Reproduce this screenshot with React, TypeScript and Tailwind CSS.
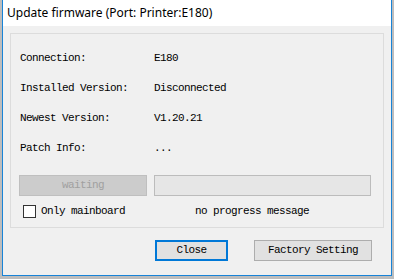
const mono = { fontFamily: '"Liberation Mono", "DejaVu Sans Mono", monospace' };

function InfoRow({ label, value }: { label: string; value: string }) {
  return (
    <div className="flex h-[30px] items-center">
      <span className="w-[143px] pl-[9px]">{label}</span>
      <span>{value}</span>
    </div>
  );
}

export default function App() {
  return (
    <div className="h-[279px] w-[394px] bg-[#bdbdbd]">
      <div className="ml-[2px] flex h-[276px] w-[390px] flex-col border-x border-b border-[#1883d7] bg-[#f0f0f0]">
        {/* title bar */}
        <div
          className="flex h-[26px] items-center bg-white pl-[4px] text-[12px] text-black"
          style={{ fontFamily: '"Noto Sans", "Open Sans", sans-serif' }}
        >
          Update firmware (Port: Printer:E180)
        </div>

        <div
          className="flex flex-1 flex-col px-[7px] pt-[7px] text-[11px] tracking-[-0.6px] text-black"
          style={mono}
        >
          {/* group box */}
          <div className="flex h-[195px] w-[374px] flex-col border border-[#dcdcdc] pt-[9px]">
            <InfoRow label="Connection:" value="E180" />
            <InfoRow label="Installed Version:" value="Disconnected" />
            <InfoRow label="Newest Version:" value="V1.20.21" />
            <InfoRow label="Patch Info:" value="..." />

            <div className="mt-[12px] flex gap-[7px] pl-[8px]">
              <div className="flex h-[21px] w-[128px] items-center justify-center border border-[#bfbfbf] bg-[#cccccc] text-[#a0a0a0]">
                waiting
              </div>
              <div className="h-[21px] w-[217px] border border-[#bcbcbc] bg-[#e6e6e6]" />
            </div>

            <div className="mt-[8px] flex h-[14px] items-center pl-[12px]">
              <div className="h-[13px] w-[13px] border border-[#333333] bg-white" />
              <span className="ml-[5px] w-[154px]">Only mainboard</span>
              <span>no progress message</span>
            </div>
          </div>

          {/* footer buttons */}
          <div className="mt-[12px] flex gap-[26px] pl-[145px]">
            <div className="flex h-[21px] w-[73px] items-center justify-center border-2 border-[#0078d7] bg-[#e1e1e1]">
              Close
            </div>
            <div className="flex h-[21px] w-[118px] items-center justify-center border border-[#adadad] bg-[#e1e1e1]">
              Factory Setting
            </div>
          </div>
        </div>
      </div>
    </div>
  );
}
